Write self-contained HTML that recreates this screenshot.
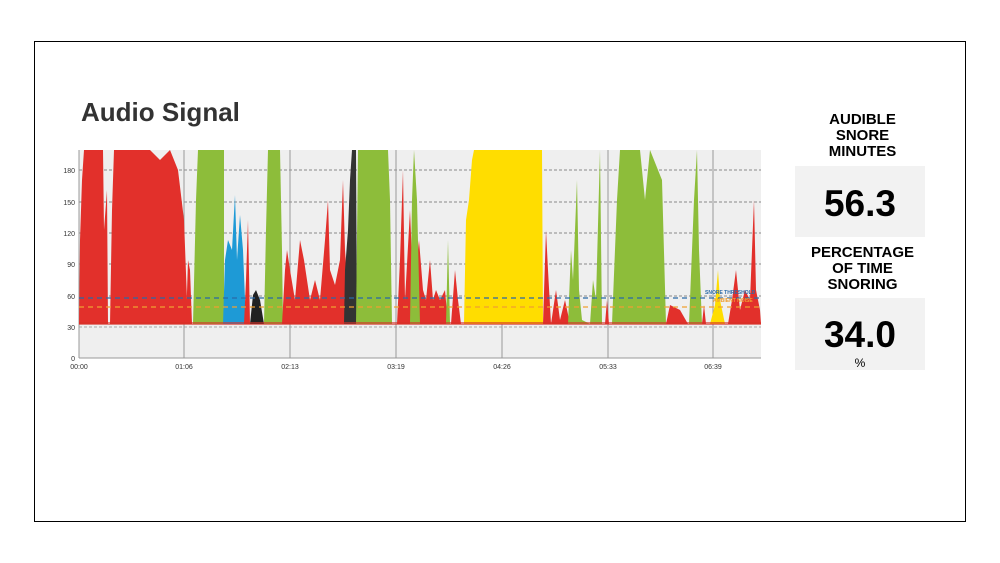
<!DOCTYPE html>
<html><head><meta charset="utf-8"><style>
body{margin:0;background:#fff;width:1000px;height:563px;overflow:hidden;position:relative;font-family:"Liberation Sans",sans-serif}
.frame{position:absolute;left:34px;top:41px;width:930px;height:479px;border:1px solid #000}
.title{position:absolute;left:81px;top:97px;font-size:26px;font-weight:bold;color:#333}
.lab{position:absolute;left:795px;width:135px;text-align:center;font-weight:bold;font-size:15px;line-height:16px;color:#000}
.box{position:absolute;left:795px;width:130px;background:#f2f2f2;text-align:center;font-weight:bold;color:#000}
</style></head><body>
<div class="frame"></div>
<div class="title">Audio Signal</div>
<div class="lab" style="top:112px">AUDIBLE<br>SNORE<br>MINUTES</div>
<div class="box" style="top:166px;height:71px"><div style="font-size:37px;line-height:37px;padding-top:19px">56.3</div></div>
<div class="lab" style="top:245px">PERCENTAGE<br>OF TIME<br>SNORING</div>
<div class="box" style="top:298px;height:72px"><div style="font-size:37px;line-height:37px;padding-top:18px">34.0</div><div style="font-size:12px;font-weight:normal;margin-top:3px">%</div></div>
<svg style="position:absolute;left:0;top:0" width="1000" height="563">
<rect x="79" y="150" width="682" height="208" fill="#efefef"/>
<g stroke="#888" stroke-dasharray="3,2" stroke-width="1">
<line x1="79" x2="761" y1="170" y2="170"/><line x1="79" x2="761" y1="202" y2="202"/><line x1="79" x2="761" y1="233" y2="233"/><line x1="79" x2="761" y1="264" y2="264"/><line x1="79" x2="761" y1="296" y2="296"/><line x1="79" x2="761" y1="327" y2="327" stroke="#aaa"/>
</g>
<g stroke="#999" stroke-width="1"><line x1="79" x2="79" y1="150" y2="358"/><line x1="184" x2="184" y1="150" y2="358"/><line x1="290" x2="290" y1="150" y2="358"/><line x1="396" x2="396" y1="150" y2="358"/><line x1="502" x2="502" y1="150" y2="358"/><line x1="608" x2="608" y1="150" y2="358"/><line x1="713" x2="713" y1="150" y2="358"/><line x1="79" x2="761" y1="358" y2="358"/></g>
<g>
<polygon fill="#e2302b" points="79,324 80,240 82,180 84,150 103,150 104,230 107,190 108,324 110,324 112,210 114,150 150,150 160,160 170,150 178,170 184,220 187,300 190,324"/>
<polygon fill="#e2302b" points="186,324 188,260 190,270 192,324"/>
<polygon fill="#8dbd3a" points="193,324 196,200 198,150 224,150 224,324"/>
<polygon fill="#1e9ad6" points="223,324 225,260 228,240 232,250 235,195 237,260 240,215 243,250 246,324"/>
<polygon fill="#e2302b" points="244,324 246,280 248,220 250,324"/>
<polygon fill="#222" points="250,324 253,295 256,290 260,300 264,324"/>
<polygon fill="#8dbd3a" points="264,324 266,230 268,150 280,150 282,250 283,324"/>
<polygon fill="#e2302b" points="282,324 285,270 287,250 290,270 295,300 300,240 304,260 310,300 315,280 320,300 325,240 328,200 330,270 335,285 340,260 343,180 345,250 350,324"/>
<polygon fill="#333" points="344,324 345,270 348,230 350,180 352,150 356,150 357,324"/>
<polygon fill="#8dbd3a" points="356,324 358,150 388,150 390,200 392,324"/>
<polygon fill="#e2302b" points="397,324 400,260 403,170 405,300 410,210 412,260 415,280 419,240 423,290 426,300 430,260 433,300 436,290 440,300 445,290 448,324"/>
<polygon fill="#8dbd3a" points="410,324 412,200 414,150 417,200 420,324"/>
<polygon fill="#8dbd3a" points="446,324 448,240 450,324"/>
<polygon fill="#e2302b" points="451,324 455,270 458,300 461,324"/>
<polygon fill="#ffdd00" points="464,324 466,220 469,200 472,160 474,150 542,150 543,324"/>
<polygon fill="#e2302b" points="543,324 546,230 548,270 551,324 556,290 560,320 565,300 570,324"/>
<polygon fill="#8dbd3a" points="568,324 571,250 573,280 577,180 579,290 582,320 590,324 593,280 596,300 600,150 602,324"/>
<polygon fill="#e2302b" points="605,324 607,300 609,324"/>
<polygon fill="#8dbd3a" points="612,324 617,200 620,150 640,150 645,200 650,150 662,180 666,324"/>
<polygon fill="#e2302b" points="666,324 670,305 680,310 688,324"/>
<polygon fill="#8dbd3a" points="689,324 692,250 694,200 697,150 699,250 702,324"/>
<polygon fill="#e2302b" points="702,324 704,305 706,324"/>
<polygon fill="#ffdd00" points="710,324 715,305 718,270 720,300 725,324"/>
<polygon fill="#e2302b" points="728,324 732,300 736,270 740,310 745,290 750,300 754,200 756,290 760,310 761,324"/>
<rect x="79" y="322" width="682" height="3" fill="#d73028" opacity=".6"/>
</g>
<line x1="79" x2="761" y1="298" y2="298" stroke="#2a6aa8" stroke-width="1.3" stroke-dasharray="5,4"/>
<line x1="79" x2="761" y1="307" y2="307" stroke="#f0a030" stroke-width="1.3" stroke-dasharray="5,4"/>
<text x="705" y="294" font-size="5" fill="#2a6aa8" font-weight="bold">SNORE THRESHOLD</text>
<text x="713" y="302" font-size="5" fill="#f0a030" font-weight="bold">AMBIENT NOISE</text>
<g font-size="7" fill="#333" text-anchor="end">
<text x="75" y="173">180</text><text x="75" y="205">150</text><text x="75" y="236">120</text><text x="75" y="267">90</text><text x="75" y="299">60</text><text x="75" y="330">30</text><text x="75" y="361">0</text>
</g>
<g font-size="7" fill="#333" text-anchor="middle">
<text x="79" y="369">00:00</text><text x="184" y="369">01:06</text><text x="290" y="369">02:13</text><text x="396" y="369">03:19</text><text x="502" y="369">04:26</text><text x="608" y="369">05:33</text><text x="713" y="369">06:39</text>
</g>
</svg>
</body></html>
